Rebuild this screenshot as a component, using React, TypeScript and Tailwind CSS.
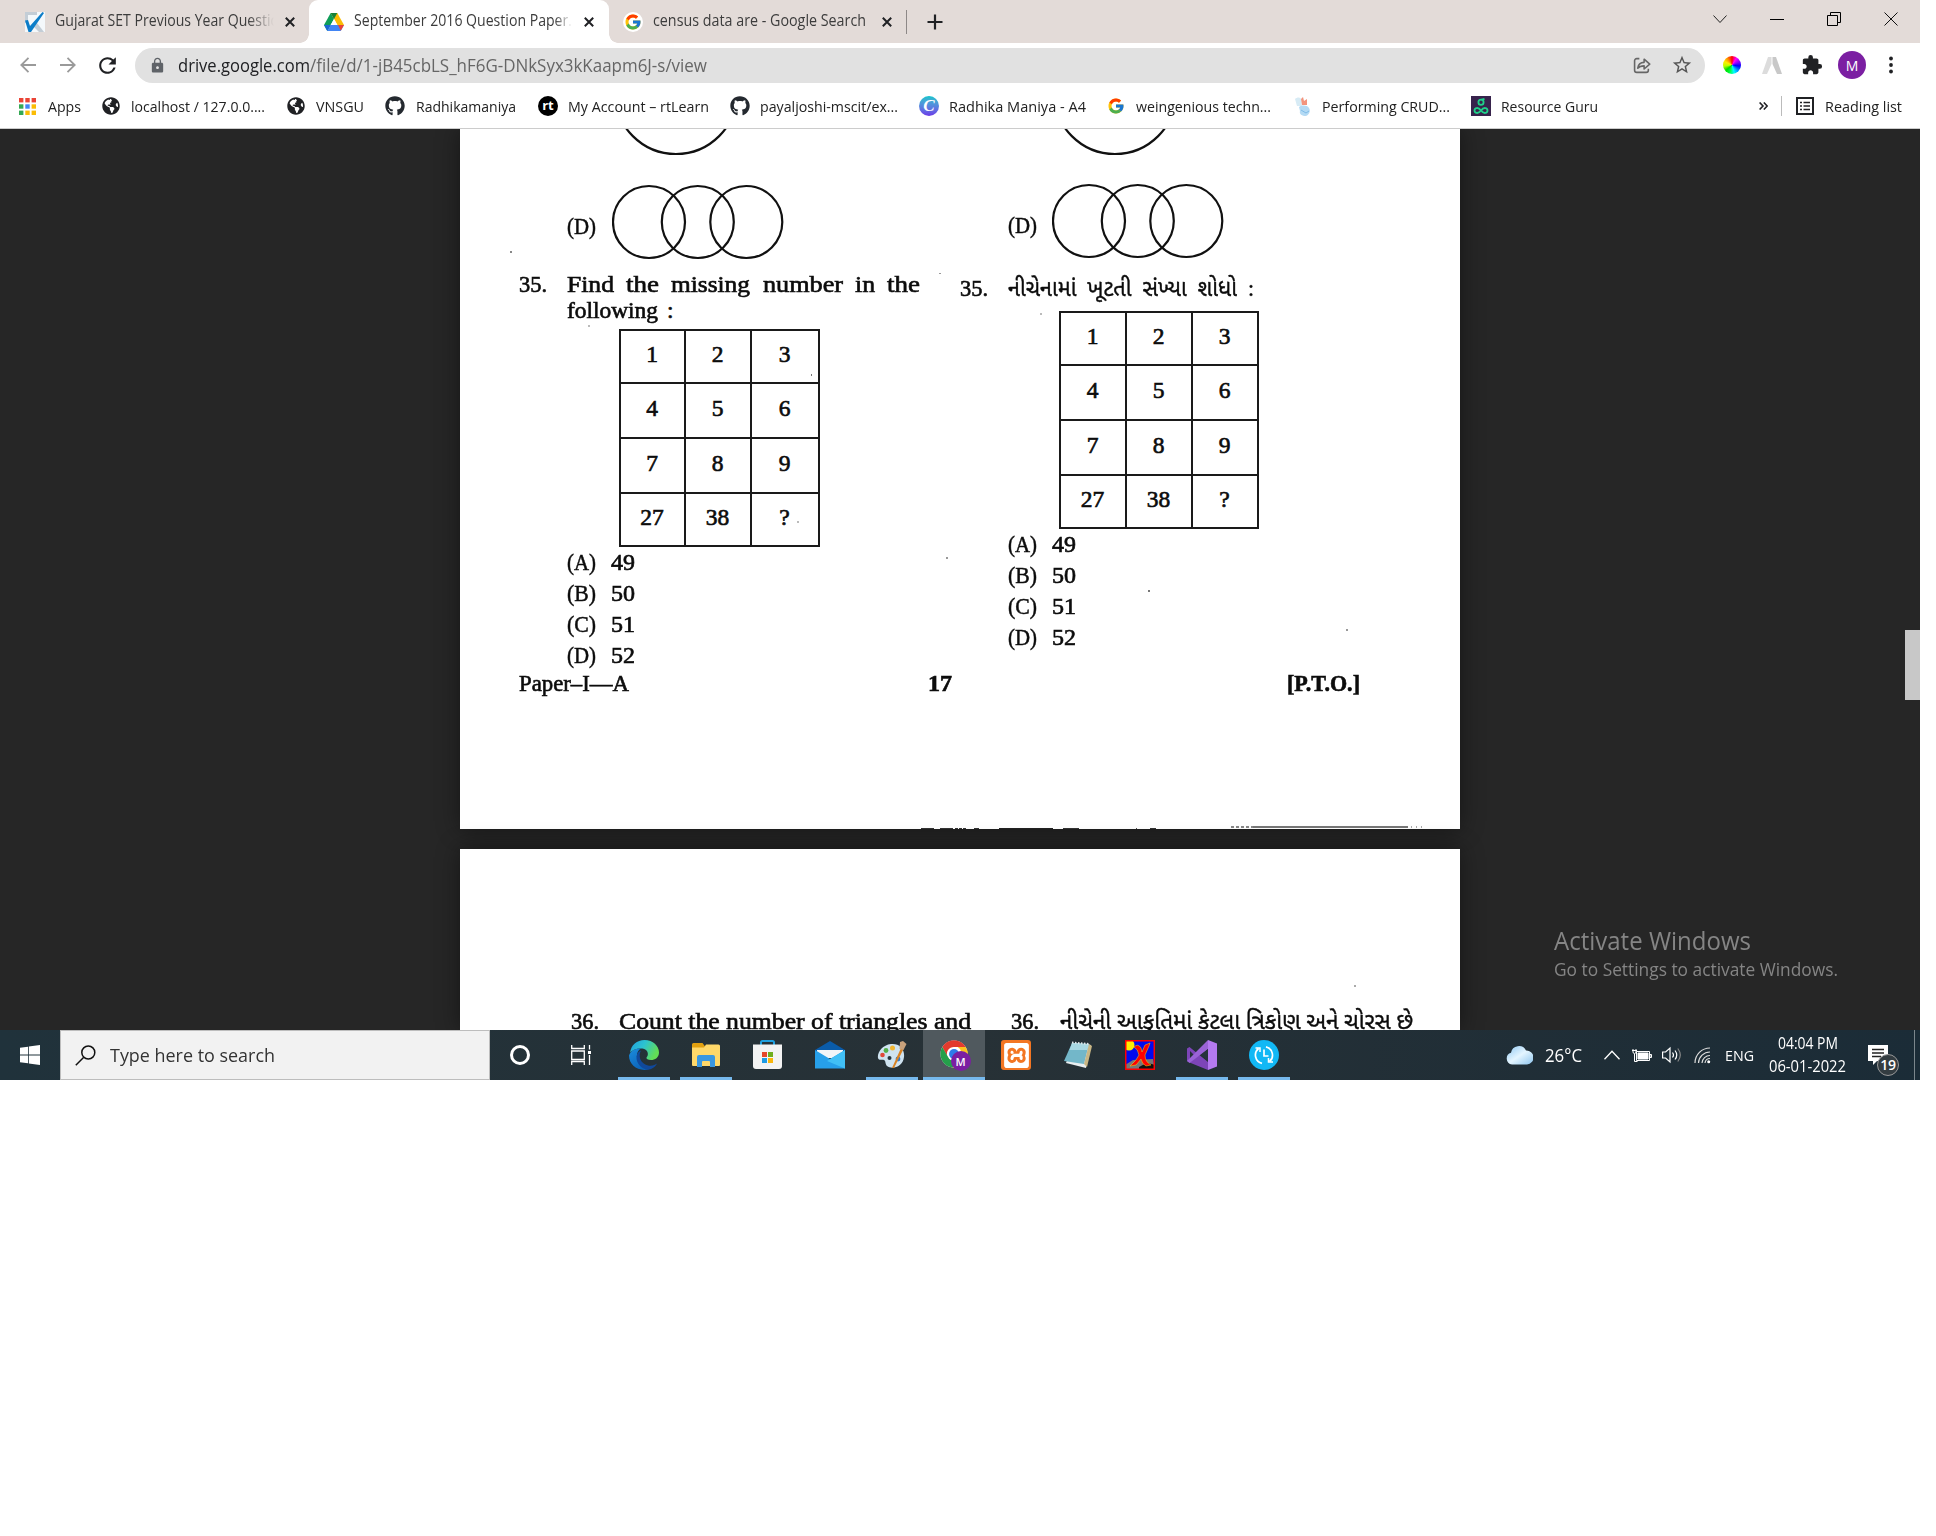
import { useLayoutEffect, useRef, useState, type ReactNode } from 'react';
import { FcGoogle } from 'react-icons/fc';
import { FaGithub, FaGlobeAmericas } from 'react-icons/fa';
import { MdExtension, MdLock, MdRefresh, MdStarBorder } from 'react-icons/md';
import { SiXampp } from 'react-icons/si';

/* One line of text, stretched or squeezed to the width of its box. */
function Fit({ className = '', children }: { className?: string; children: ReactNode }) {
  const box = useRef<HTMLSpanElement>(null);
  const text = useRef<HTMLSpanElement>(null);
  const [scale, setScale] = useState(1);
  useLayoutEffect(() => {
    if (box.current && text.current && text.current.offsetWidth) {
      setScale(box.current.clientWidth / text.current.getBoundingClientRect().width);
    }
  }, []);
  return (
    <span ref={box} className={`block shrink-0 whitespace-nowrap ${className}`}>
      <span ref={text} className="inline-block origin-left" style={{ transform: `scaleX(${scale})` }}>
        {children}
      </span>
    </span>
  );
}

/* ---------- browser chrome ---------- */

function Close({ className = '' }: { className?: string }) {
  return (
    <svg viewBox="0 0 10 10" className={`h-[10px] w-[10px] shrink-0 ${className}`}>
      <path d="M.8.8l8.4 8.4M9.2.8L.8 9.2" stroke="#202124" strokeWidth="2" fill="none" />
    </svg>
  );
}

function TabStrip() {
  return (
    <div className="flex h-[43px] items-center bg-[#e3dbd8] text-[15.5px] text-[#3c3c3c]">
      <div className="flex h-full w-[309px] items-center">
        <svg viewBox="0 0 20 20" className="ml-[25px] h-5 w-5 shrink-0">
          <rect width="20" height="20" fill="#f4f8fb" />
          <path d="M0 0h12v3H3v8H0z" fill="#c3cdd6" />
          <path d="M12 11l7 9h-5l-5-5z" fill="#c3cdd6" />
          <path d="M0 8.500l3-.5 2 6L17.500 0 19 1 6 20H3.500z" fill="#0c7dc8" />
        </svg>
        <div className="ml-[10px] w-[219px] shrink-0 overflow-hidden pb-[2px] [mask-image:linear-gradient(to_right,black_88%,transparent)]">
          <Fit className="w-[224px]">Gujarat SET Previous Year Questio</Fit>
        </div>
        <Close className="ml-[11px]" />
      </div>
      <div className="relative flex h-full w-[300px] items-center rounded-t-[9px] bg-white">
        <span className="absolute bottom-0 -left-[9px] h-[9px] w-[9px] bg-[radial-gradient(circle_at_0_0,#e3dbd8_8.5px,white_9px)]" />
        <span className="absolute -right-[9px] bottom-0 h-[9px] w-[9px] bg-[radial-gradient(circle_at_100%_0,#e3dbd8_8.5px,white_9px)]" />
        <svg viewBox="0 0 20 18" className="ml-[15px] h-[18px] w-5 shrink-0">
          <path d="M6.7 0h6.6L20 12h-6.6z" fill="#fbbc04" />
          <path d="M6.7 0L0 12l3.3 6L10 6z" fill="#0f9d58" />
          <path d="M6.7 12H20l-3.3 6H3.3z" fill="#4285f4" />
          <path d="M14 12h6l-3.2 5.8z" fill="#ea4335" />
          <path d="M6.7 12L3.3 18 0 12z" fill="#1b66d2" />
          <path d="M6.7 0h6.6L10 6z" fill="#188038" />
          <path d="M6.7 12L10 6l3.4 6z" fill="#fff" />
        </svg>
        <div className="ml-[10px] w-[218px] shrink-0 overflow-hidden pb-[2px] [mask-image:linear-gradient(to_right,black_92%,transparent)]">
          <Fit className="w-[218px]">September 2016 Question Paper.</Fit>
        </div>
        <Close className="ml-[12px]" />
      </div>
      <div className="flex h-full w-[297px] items-center">
        <span className="ml-[14px] flex h-5 w-5 items-center justify-center rounded-full bg-white">
          <FcGoogle className="h-[18px] w-[18px]" />
        </span>
        <Fit className="ml-[10px] w-[213px] pb-px">census data are - Google Search</Fit>
        <Close className="ml-[16px]" />
      </div>
      <span className="h-[24px] w-px bg-[#8d8887]" />
      <svg viewBox="0 0 16 16" className="ml-[20px] h-4 w-4">
        <path d="M8 .5v15M.5 8h15" stroke="#202124" strokeWidth="2.2" />
      </svg>
      <div className="mr-[22px] mb-[6px] ml-auto flex items-center gap-[43px]">
        <svg viewBox="0 0 14 14" className="h-[14px] w-[14px]" fill="none" stroke="#222">
          <path d="M.5 3.500L7 10.500l6.500-7" />
        </svg>
        <svg viewBox="0 0 14 14" className="h-[14px] w-[14px]">
          <path d="M0 7.500h14" stroke="#000" />
        </svg>
        <svg viewBox="0 0 14 14" className="h-[14px] w-[14px]" fill="none" stroke="#000">
          <path d="M.5 3.500h10v10H.5zM3.500 3V.5h10v10H11" />
        </svg>
        <svg viewBox="0 0 14 14" className="h-[14px] w-[14px]">
          <path d="M.5.5l13 13M13.500.5l-13 13" stroke="#111" />
        </svg>
      </div>
    </div>
  );
}

function Toolbar() {
  return (
    <div className="flex h-[44px] items-center bg-white">
      <svg viewBox="0 0 16 16" className="ml-[20px] h-4 w-4" fill="none" stroke="#9a9a9a" strokeWidth="1.800">
        <path d="M16 8H1.500M8.500.8L1.300 8l7.200 7.200" />
      </svg>
      <svg viewBox="0 0 16 16" className="ml-[24px] h-4 w-4" fill="none" stroke="#9a9a9a" strokeWidth="1.800">
        <path d="M0 8h14.500M7.500.8L14.700 8l-7.200 7.200" />
      </svg>
      <MdRefresh className="ml-[19px] h-[25px] w-[25px] text-[#202124]" />
      <div className="ml-[15px] flex h-[35px] w-[1570px] items-center rounded-full bg-[#e1e1e1]">
        <MdLock className="ml-[14px] h-[17px] w-[17px] text-[#5f6368]" />
        <div className="ml-[12px] flex items-center text-[17.500px] text-[#666]">
          <Fit className="w-[132px] text-[#202124]">drive.google.com</Fit>
          <Fit className="w-[397px]">/file/d/1-jB45cbLS_hF6G-DNkSyx3kKaapm6J-s/view</Fit>
        </div>
        <svg viewBox="0 0 17 17" className="mr-[20px] ml-auto h-[18px] w-[18px]" fill="none" stroke="#666" strokeWidth="1.500">
          <path d="M6 2.500H3.500a2 2 0 0 0-2 2v9a2 2 0 0 0 2 2h9a2 2 0 0 0 2-2V12" />
          <path d="M4.500 11.500C5 7.500 7.500 6 10.500 6V3l5.300 4.700-5.300 4.600V9.300c-2.500 0-4.500.5-6 2.200z" strokeLinejoin="round" />
        </svg>
        <MdStarBorder className="mr-[12px] h-[22px] w-[22px] text-[#555]" />
      </div>
      <span className="ml-[18px] h-[18px] w-[18px] rounded-full bg-[conic-gradient(#f00,#f0f,#80f,#00f,#08f,#0ff,#0f4,#0d0,#bf0,#fe0,#f80,#f00)]" />
      <svg viewBox="0 0 20 17" className="ml-[21px] h-[17px] w-5">
        <path d="M6 0h3.500v7L5 17H0z" fill="#dcdcdc" />
        <path d="M10.500 0H14l6 17h-5l-4.500-10z" fill="#c8c8c8" />
      </svg>
      <MdExtension className="ml-[19px] h-[22px] w-[22px] text-[#202124]" />
      <span className="ml-[15px] flex h-7 w-7 items-center justify-center rounded-full bg-[#7b1fa2] text-[14px] text-white">
        M
      </span>
      <svg viewBox="0 0 4 18" className="ml-[23px] h-[18px] w-[4px]" fill="#202124">
        <circle cx="2" cy="2.500" r="1.900" />
        <circle cx="2" cy="9" r="1.900" />
        <circle cx="2" cy="15.500" r="1.900" />
      </svg>
    </div>
  );
}

const APP_COLORS = ['#ea4335', '#ea4335', '#ea4335', '#34a853', '#4285f4', '#fbbc04', '#34a853', '#fbbc04', '#fbbc04'];

function BookmarksBar() {
  return (
    <div className="flex h-[42px] items-center border-b border-[#ccc] bg-white pb-[3px] text-[15.200px] leading-[20px] text-[#222]">
      <svg viewBox="0 0 17 17" className="ml-[19px] h-[17px] w-[17px]">
        {APP_COLORS.map((c, i) => (
          <rect key={i} x={(i % 3) * 6.300} y={Math.floor(i / 3) * 6.300} width="4.400" height="4.400" fill={c} />
        ))}
      </svg>
      <Fit className="ml-[12px] w-[33px]">Apps</Fit>
      <FaGlobeAmericas className="ml-[21px] h-[18px] w-[18px] text-[#202124]" />
      <Fit className="ml-[11px] w-[134px]">localhost / 127.0.0....</Fit>
      <FaGlobeAmericas className="ml-[22px] h-[18px] w-[18px] text-[#202124]" />
      <Fit className="ml-[11px] w-[48px]">VNSGU</Fit>
      <FaGithub className="ml-[21px] h-5 w-5 text-[#24292f]" />
      <Fit className="ml-[11px] w-[100px]">Radhikamaniya</Fit>
      <span className="ml-[22px] flex h-5 w-5 items-center justify-center rounded-full bg-black pb-px text-[13px] leading-none font-bold text-white">
        rt
      </span>
      <Fit className="ml-[10px] w-[141px]">My Account – rtLearn</Fit>
      <FaGithub className="ml-[21px] h-5 w-5 text-[#24292f]" />
      <Fit className="ml-[10px] w-[138px]">payaljoshi-mscit/ex...</Fit>
      <span className="ml-[21px] flex h-5 w-5 items-center justify-center rounded-full bg-linear-to-b from-[#00c4cc] to-[#6a35e8] pb-[2px] font-['Liberation_Serif',serif] text-[17px] leading-none font-bold text-white italic">
        C
      </span>
      <Fit className="ml-[10px] w-[137px]">Radhika Maniya - A4</Fit>
      <FcGoogle className="ml-[21px] h-[18px] w-[18px]" />
      <Fit className="ml-[11px] w-[135px]">weingenious techn...</Fit>
      <svg viewBox="0 0 16 19" className="ml-[24px] h-[19px] w-4">
        <path d="M0 2c2-2 5-2 6 0l1 7H2z" fill="#d7ebf5" />
        <path d="M6 2l2-2 1 4 3-2v6H7z" fill="#f0795c" opacity=".8" />
        <path d="M4 10c3-2 8-2 10 1 2 3 0 7-3 8-4 0-7-2-6-5z" fill="#b4daf4" />
        <path d="M6 13l5 3 3-2" stroke="#7fbce8" fill="none" />
      </svg>
      <Fit className="ml-[11px] w-[128px]">Performing CRUD...</Fit>
      <svg viewBox="0 0 20 20" className="ml-[21px] h-5 w-5" fill="none" stroke="#1fd18a" strokeWidth="1.800">
        <rect width="20" height="20" fill="#37234c" stroke="none" />
        <circle cx="10" cy="6.300" r="2.600" />
        <path d="M10.500 3.700L13.500 3" />
        <path d="M10 14.500c-3-4-6.500-2.500-6.500 0s3.500 4 6.500 0c3-4 6.500-2.500 6.500 0s-3.500 4-6.500 0z" />
      </svg>
      <Fit className="ml-[10px] w-[97px]">Resource Guru</Fit>
      <svg viewBox="0 0 9 8" className="mr-[13px] ml-auto h-[8px] w-[9px]" fill="none" stroke="#202124" strokeWidth="1.600">
        <path d="M.6.5L4 4 .6 7.500M4.800.5L8.200 4 4.800 7.500" />
      </svg>
      <span className="h-5 w-px bg-[#bbb]" />
      <svg viewBox="0 0 18 18" className="ml-[14px] h-[18px] w-[18px]" fill="none" stroke="#202124" strokeWidth="2">
        <rect x="1" y="1" width="16" height="16" />
        <path d="M4 5.500h2M4 9h2M4 12.500h2M7.500 5.500H14M7.500 9H14M7.500 12.500H14" strokeWidth="1.500" />
      </svg>
      <Fit className="mr-[18px] ml-[11px] w-[77px]">Reading list</Fit>
    </div>
  );
}

/* ---------- scanned paper ---------- */

function Arc({ className = '' }: { className?: string }) {
  return (
    <svg viewBox="0 0 128 28" className={`block h-[28px] w-[128px] ${className}`}>
      <circle cx="64" cy="-36" r="61" fill="none" stroke="#111" strokeWidth="2.200" />
    </svg>
  );
}

function Venn({ className = '' }: { className?: string }) {
  return (
    <svg viewBox="0 0 172 76" className={`h-[76px] w-[172px] shrink-0 ${className}`} fill="none" stroke="#111" strokeWidth="2.200">
      <circle cx="37" cy="38" r="36" />
      <circle cx="85.800" cy="38" r="36" />
      <circle cx="134.300" cy="38" r="36" />
    </svg>
  );
}

function NumberGrid({ className = '' }: { className?: string }) {
  const cells = ['1', '2', '3', '4', '5', '6', '7', '8', '9', '27', '38', '?'];
  return (
    <div className={`grid grid-rows-[53px_55px_55px_53px] border-t-2 border-l-2 border-[#1a1a1a] ${className}`}>
      {cells.map((c) => (
        <div key={c} className="flex items-center justify-center border-r-2 border-b-2 border-[#1a1a1a] pr-px pb-[5px]">
          {c}
        </div>
      ))}
    </div>
  );
}

function Options() {
  const options = [
    ['(A)', '49'],
    ['(B)', '50'],
    ['(C)', '51'],
    ['(D)', '52'],
  ];
  return (
    <div className="mt-[2px] ml-[49px]">
      {options.map(([label, value]) => (
        <div key={label} className="flex h-[31px]">
          <Fit className="w-[29px] [-webkit-text-stroke:0.5px]">{label}</Fit>
          <Fit className="ml-[15px] w-[24px]">{value}</Fit>
        </div>
      ))}
    </div>
  );
}

function PaperOne() {
  return (
    <div className="h-[700px] w-[1000px] shrink-0 overflow-hidden bg-white shadow-[0_0_22px_rgba(0,0,0,0.45)]">
      <div className="flex h-[540px] pl-[58px]">
        <div className="w-[441px]">
          <Arc className="ml-[94px]" />
          <div className="mt-[27px] flex h-[76px] pl-[49px]">
            <Fit className="mt-[29px] w-[29px] [-webkit-text-stroke:0.5px]">(D)</Fit>
            <Venn className="ml-[16px]" />
          </div>
          <div className="mt-[11px] flex">
            <Fit className="ml-px w-[28px]">35.</Fit>
            <div className="ml-[20px] w-[353px]">
              <div className="flex justify-between">
                <Fit className="w-[47px]">Find</Fit>
                <Fit className="w-[33px]">the</Fit>
                <Fit className="w-[79px]">missing</Fit>
                <Fit className="w-[80px]">number</Fit>
                <Fit className="w-[20px]">in</Fit>
                <Fit className="w-[33px]">the</Fit>
              </div>
              <div className="flex">
                <Fit className="w-[91px]">following</Fit>
                <span className="ml-[9px]">:</span>
              </div>
            </div>
          </div>
          <NumberGrid className="mt-[6px] ml-[101px] w-[201px] grid-cols-[65px_66px_68px]" />
          <Options />
        </div>
        <div className="flex-1">
          <Arc className="ml-[92px]" />
          <div className="mt-[26px] flex h-[76px] pl-[49px]">
            <Fit className="mt-[29px] w-[29px] [-webkit-text-stroke:0.5px]">(D)</Fit>
            <Venn className="ml-[15px]" />
          </div>
          <div className="mt-[16px] flex h-[26px]">
            <Fit className="ml-px w-[28px]">35.</Fit>
            <Fit className="ml-[20px] w-[246px] [-webkit-text-stroke:0.4px]">નીચેનામાં &nbsp;ખૂટતી &nbsp;સંખ્યા &nbsp;શોધો &nbsp;:</Fit>
          </div>
          <NumberGrid className="mt-[10px] ml-[100px] w-[200px] grid-cols-[66px_66px_66px]" />
          <Options />
        </div>
      </div>
      <div className="flex h-[26px] pl-[59px]">
        <Fit className="mt-px w-[110px]">Paper–I—A</Fit>
        <Fit className="mt-px ml-[299px] w-[24px] font-bold">17</Fit>
        <Fit className="mt-px ml-[335px] w-[73px] font-bold">[P.T.O.]</Fit>
      </div>
      <div className="mt-[131px] flex h-[3px] items-end pl-[461px]">
        <span className="h-px w-[13px] bg-[#333]" />
        <span className="ml-[6px] h-px w-[13px] bg-[#333]" />
        <span className="ml-[2px] h-px w-[12px] bg-[repeating-linear-gradient(90deg,#333_0_3px,white_3px_4px)]" />
        <span className="ml-[7px] h-px w-[5px] bg-[#333]" />
        <span className="ml-[20px] h-px w-[54px] bg-[#222]" />
        <span className="ml-[10px] h-px w-[16px] bg-[#333]" />
        <span className="ml-[57px] h-px w-px bg-[#555]" />
        <span className="ml-[13px] h-px w-[6px] bg-[#333]" />
        <span className="mb-px ml-[75px] h-[2px] w-[22px] bg-[repeating-linear-gradient(90deg,#888_0_3px,white_3px_5px)]" />
        <span className="mb-px h-[2px] w-[155px] bg-[#777]" />
        <span className="mb-px ml-[3px] h-[2px] w-[14px] bg-[repeating-linear-gradient(90deg,#aaa_0_1px,white_1px_5px)]" />
      </div>
    </div>
  );
}

function PaperTwo() {
  return (
    <div className="mt-[20px] h-[181px] w-[1000px] shrink-0 overflow-hidden bg-white pt-[159px] shadow-[0_0_22px_rgba(0,0,0,0.45)]">
      <div className="flex pl-[111px]">
        <Fit className="w-[28px]">36.</Fit>
        <Fit className="ml-[20px] w-[352px]">Count the number of triangles and</Fit>
        <Fit className="ml-[40px] w-[28px]">36.</Fit>
        <Fit className="ml-[21px] w-[353px] [-webkit-text-stroke:0.4px]">નીચેની આકૃતિમાં કેટલા ત્રિકોણ અને ચોરસ છે</Fit>
      </div>
    </div>
  );
}

/* Dust marks left by the scanner. */
function Specks() {
  return (
    <>
      <span className="absolute top-[122px] left-[510px] h-[2px] w-[2px] bg-[#888]" />
      <span className="absolute top-[144px] left-[939px] h-[1px] w-[2px] bg-[#999]" />
      <span className="absolute top-[196px] left-[588px] h-[2px] w-[2px] bg-[#bbb]" />
      <span className="absolute top-[245px] left-[811px] h-[2px] w-[1px] bg-[#777]" />
      <span className="absolute top-[392px] left-[797px] h-[2px] w-[2px] bg-[#bbb]" />
      <span className="absolute top-[184px] left-[1040px] h-[2px] w-[2px] bg-[#bbb]" />
      <span className="absolute top-[428px] left-[946px] h-[2px] w-[2px] bg-[#999]" />
      <span className="absolute top-[461px] left-[1148px] h-[2px] w-[2px] bg-[#777]" />
      <span className="absolute top-[500px] left-[1346px] h-[2px] w-[2px] bg-[#999]" />
      <span className="absolute top-[856px] left-[1354px] h-[2px] w-[2px] bg-[#aaa]" />
    </>
  );
}

function Viewer() {
  return (
    <div className="relative h-[901px] overflow-hidden bg-[#262626]">
      <div className="ml-[460px] flex w-[1000px] flex-col font-['Liberation_Serif','Noto_Sans_Gujarati',serif] text-[23.500px] leading-[26px] text-[#0c0c0c] [-webkit-text-stroke:0.65px]">
        <PaperOne />
        <PaperTwo />
      </div>
      <Specks />
      <div className="absolute top-[501px] right-0 h-[70px] w-[15px] bg-[#c8c8c8]" />
      <div className="absolute top-[795px] left-[1554px] text-[#858585]">
        <Fit className="w-[197px] text-[26px] leading-[32px]">Activate Windows</Fit>
        <Fit className="mt-px w-[284px] text-[18px] leading-[24px]">Go to Settings to activate Windows.</Fit>
      </div>
    </div>
  );
}

/* ---------- taskbar ---------- */

function EdgeIcon() {
  return (
    <svg viewBox="0 0 30 30" className="h-[30px] w-[30px]">
      <defs>
        <linearGradient id="edgeTop" x1="0" y1="0" x2="1" y2="0.400">
          <stop offset="0" stopColor="#1f9de0" />
          <stop offset=".5" stopColor="#2cc3d0" />
          <stop offset="1" stopColor="#62dd55" />
        </linearGradient>
        <linearGradient id="edgeLeft" x1="0" y1="0" x2="0.600" y2="1">
          <stop offset="0" stopColor="#1b8ddd" />
          <stop offset="1" stopColor="#0b62b8" />
        </linearGradient>
      </defs>
      <path d="M1 13C2 5 8 0 15.500 0 24 0 30 6 30 12.500c0 5-4 7.500-8 7.500-3 0-5-1-4.500-2.500 3-3 1-8.500-4-9C8 8 3 10 1 13z" fill="url(#edgeTop)" />
      <path d="M0 15.500C2 10 7 8 12 8.500c-3 1.500-4.500 5-4 9C9 24 15 29 20 29.300 9 32 0 25 0 15.500z" fill="url(#edgeLeft)" />
      <path d="M12 10.500c-3 5-1 13 7 15 4 .8 7-.5 9-2-2 4-6 6-9 6.200C12 29 7 23 7.500 16.500 8 13 10 11 12 10.500z" fill="#10499c" />
    </svg>
  );
}

function ExplorerIcon() {
  return (
    <svg viewBox="0 0 28 24" className="h-[24px] w-[28px]">
      <path d="M0 1.500Q0 0 1.500 0h9l3 4H28v18H0z" fill="#e2a00f" />
      <path d="M0 4.500h12l2-3h12.500Q28 1.500 28 3v19q0 1-1 1H1q-1 0-1-1z" fill="#ffd869" />
      <path d="M5 14q0-2 2-2h14q2 0 2 2v10h-5v-5q0-1-1-1h-6q-1 0-1 1v5H5z" fill="#3a97e0" />
    </svg>
  );
}

function StoreIcon() {
  return (
    <svg viewBox="0 0 29 30" className="h-[30px] w-[29px]">
      <path d="M8 6V2.500Q8 1 9.500 1h10Q21 1 21 2.500V6" fill="none" stroke="#1fa0e0" strokeWidth="2" />
      <path d="M0 4.500h29V26q0 3-3 3H3q-3 0-3-3z" fill="#f3f3f3" />
      <path d="M9 12h5v5H9z" fill="#e5472b" />
      <path d="M15 12h5v5h-5z" fill="#6fae1e" />
      <path d="M9 18h5v5H9z" fill="#1e9be4" />
      <path d="M15 18h5v5h-5z" fill="#f9b60d" />
    </svg>
  );
}

function MailIcon() {
  return (
    <svg viewBox="0 0 30 28" className="h-[28px] w-[30px]">
      <path d="M0 9L15 0l15 9v5H0z" fill="#0a5ba8" />
      <path d="M2 9h26v8H2z" fill="#f2f5f8" />
      <path d="M0 9l15 9 15-9v18.500H0z" fill="#27a0ea" />
      <path d="M30 9L12 20l18 7.500z" fill="#41c0f6" />
    </svg>
  );
}

function PaintIcon() {
  return (
    <svg viewBox="0 0 30 28" className="h-[28px] w-[30px]">
      <path d="M14 3C5 4 0 12 1 17c1 3 4 1 6 2s1 4 3 6c5 4 16 1 17-9C28 8 22 2 14 3z" fill="#cfe3f0" />
      <circle cx="15.500" cy="7" r="2.500" fill="#f2b632" />
      <circle cx="9" cy="9.500" r="2.400" fill="#55b04a" />
      <circle cx="5.500" cy="14" r="2.300" fill="#e04a3a" />
      <circle cx="21" cy="18" r="2.400" fill="#2e7bd0" />
      <circle cx="12.500" cy="17" r="2" fill="#26343c" />
      <path d="M24 7l2.500 1L17 27h-2z" fill="#d98324" />
      <path d="M23 1l3-1 3.500 3-3 6-4-1z" fill="#c9a27c" />
    </svg>
  );
}

function ChromeIcon() {
  return (
    <span className="relative ml-[3px] block h-[30px] w-[32px]">
      <svg viewBox="0 0 30 30" className="h-[28px] w-[28px]">
        <circle cx="15" cy="15" r="14.500" fill="#fff" />
        <path d="M2.500 7.500a14.500 14.500 0 0 1 25 0H15A7.500 7.500 0 0 0 8 18z" fill="#e33b2e" />
        <path d="M2.500 7.500L8.500 18A7.500 7.500 0 0 0 17 22l-3.500 7.500A14.500 14.500 0 0 1 2.500 7.500z" fill="#25a04b" />
        <path d="M27.500 7.500A14.500 14.500 0 0 1 13.500 29.500L21 19a7.500 7.500 0 0 0-2-11.500z" fill="#fcc31e" />
        <circle cx="15" cy="15" r="6.800" fill="#fff" />
        <circle cx="15" cy="15" r="5.300" fill="#2f7bea" />
      </svg>
      <span className="absolute top-[11px] left-[11px] flex h-[20px] w-[20px] items-center justify-center rounded-full bg-[#7b1fa2] text-[11px] leading-none font-semibold text-white">
        M
      </span>
    </span>
  );
}

function NotepadIcon() {
  return (
    <svg viewBox="0 0 28 28" className="h-[28px] w-[28px]">
      <path d="M9 2l18 2-5 23L2 22z" fill="#e9eef0" />
      <path d="M8 2l17 1-5 20L0 20z" fill="#73b7c9" />
      <path d="M8 2l17 1-1.500 6L5.500 9z" fill="#a9d8e2" />
      <path d="M8 1.500l17 1.500" stroke="#dfe6e8" strokeWidth="2" strokeDasharray="1.500 1.500" />
      <path d="M20 23l5-20 3 2-5 21z" fill="#c9b684" />
    </svg>
  );
}

function PixelXIcon() {
  return (
    <svg viewBox="0 0 30 30" className="h-[30px] w-[30px]">
      <rect width="30" height="30" fill="#0009ee" />
      <path d="M0 25l8-5 20-1 2 11H0z" fill="#777" />
      <path d="M14 27q8-6 16-2v5H14z" fill="#111" />
      <circle cx="4" cy="5" r="5.500" fill="#ffee00" />
      <path d="M9 7q4-4 7 1l1 4 3-7 5-2-1 3-4 9q0 7 6 10l-5 1q-4-2-5-7l-5 6-6 1q7-6 9-11-1-6-5-8z" fill="#f00" stroke="#fd0" strokeWidth=".5" />
      <rect x=".75" y=".75" width="28.500" height="28.500" fill="none" stroke="#f00" strokeWidth="1.500" />
    </svg>
  );
}

function VisualStudioIcon() {
  return (
    <svg viewBox="0 0 30 30" className="h-[30px] w-[30px]">
      <path d="M0 8.500L2.500 7 21 22v8L2.500 22.500 0 21zM3 11v8l4-4z" fill="#7d45b8" fillRule="evenodd" />
      <path d="M0 21L21 0v9L2.500 23z" fill="#9a63d6" />
      <path d="M21 0l9 3.500v23L21 30z" fill="#b47af0" />
      <path d="M21 9v12l-7-6z" fill="#26333b" />
    </svg>
  );
}

function ClockIcon() {
  return (
    <svg viewBox="0 0 30 30" className="h-[30px] w-[30px]" fill="none" stroke="#fff" strokeWidth="1.700">
      <circle cx="15" cy="15" r="15" fill="#12b8f5" stroke="none" />
      <path d="M9.500 8.500a8.500 8.500 0 0 0 3.500 14.800M20.500 21.500A8.500 8.500 0 0 0 17 6.800" />
      <path d="M6.500 8h4.500v4M24 22h-4.500v-4" strokeWidth="1.500" />
      <path d="M15 9.500V16h4.500" />
    </svg>
  );
}

function TaskCell({ children, open = false, active = false }: { children: ReactNode; open?: boolean; active?: boolean }) {
  return (
    <div className={`relative flex h-full w-[62px] items-center justify-center ${active ? 'bg-[#50595e]' : ''}`}>
      {children}
      {open && <span className={`absolute bottom-0 h-[3px] bg-[#76b9ed] ${active ? 'inset-x-0' : 'inset-x-[5px]'}`} />}
    </div>
  );
}

function Taskbar() {
  return (
    <div className="flex h-[50px] items-center bg-linear-to-r from-[#20323b] via-[#273136] to-[#1b2c37] text-white">
      <svg viewBox="0 0 20 20" className="ml-[20px] h-5 w-5" fill="#fff">
        <path d="M0 2.800L8 1.700v7.900H0zM8.800 1.500L20 0v9.600H8.800zM0 10.400h8v7.900l-8-1.100zM8.800 10.400H20V20L8.800 18.500z" />
      </svg>
      <div className="ml-[20px] flex h-full w-[430px] items-center border border-[#bdbdbd] bg-[#f2f2f2] text-[#333]">
        <svg viewBox="0 0 21 21" className="ml-[14px] h-[21px] w-[21px]" fill="none" stroke="#111" strokeWidth="1.500">
          <circle cx="13.300" cy="7.500" r="6.500" />
          <path d="M8.500 12.500L.8 20.200" />
        </svg>
        <Fit className="ml-[14px] w-[165px] text-[18.500px]">Type here to search</Fit>
      </div>
      <div className="-ml-px flex h-full">
        <TaskCell>
          <span className="mr-px h-[20px] w-[20px] rounded-full border-3 border-white" />
        </TaskCell>
        <TaskCell>
          <svg viewBox="0 0 20 20" className="mr-[3px] h-5 w-5" fill="none" stroke="#fff" strokeWidth="1.300">
            <path d="M.7 0v3.500h12.600V0M.7 6h12.600v8.500H.7zM.7 20v-3.500h12.600V20M18.500 0v4.500M18.500 10v10" />
            <path d="M17 6h3v3h-3z" fill="#fff" stroke="none" />
          </svg>
        </TaskCell>
        <TaskCell open><EdgeIcon /></TaskCell>
        <TaskCell open><ExplorerIcon /></TaskCell>
        <TaskCell><span className="mr-[2px]"><StoreIcon /></span></TaskCell>
        <TaskCell><MailIcon /></TaskCell>
        <TaskCell open><PaintIcon /></TaskCell>
        <TaskCell open active><ChromeIcon /></TaskCell>
        <TaskCell>
          <span className="flex h-[30px] w-[30px] items-center justify-center rounded-[3px] bg-[#f37623]">
            <SiXampp className="h-[25px] w-[25px] text-white" />
          </span>
        </TaskCell>
        <TaskCell><NotepadIcon /></TaskCell>
        <TaskCell><PixelXIcon /></TaskCell>
        <TaskCell open><VisualStudioIcon /></TaskCell>
        <TaskCell open><ClockIcon /></TaskCell>
      </div>
      <svg viewBox="0 0 27 20" className="ml-auto h-[20px] w-[27px]">
        <defs>
          <linearGradient id="cloud" x1="0" y1="0" x2="1" y2="1">
            <stop offset="0" stopColor="#8fc8f2" />
            <stop offset=".5" stopColor="#e4f5ff" />
            <stop offset="1" stopColor="#8cc4ee" />
          </linearGradient>
        </defs>
        <path d="M6 19.500a6 6 0 0 1-1-11.700A8 8 0 0 1 20 5.500 7 7 0 0 1 21 19.500z" fill="url(#cloud)" />
      </svg>
      <Fit className="ml-[12px] w-[37px] pt-px text-[17.500px]">26°C</Fit>
      <svg viewBox="0 0 16 10" className="ml-[22px] h-[10px] w-4" fill="none" stroke="#fff" strokeWidth="1.300">
        <path d="M.5 9.300L8 1.300l7.500 8" />
      </svg>
      <svg viewBox="0 0 20 14" className="ml-[12px] h-[14px] w-5" fill="none" stroke="#fff">
        <path d="M4.500 3.500h13v9H4.500z" />
        <path d="M6 5h10v6H6z" fill="#fff" />
        <path d="M18 6.500h1.500v3H18zM1 1v3q0 1.500 1.500 1.500T4 4V1M0 2.500h5M2.500 6v7.500h3" />
      </svg>
      <svg viewBox="0 0 20 18" className="ml-[10px] h-[18px] w-5" fill="none" stroke="#fff" strokeWidth="1.200">
        <path d="M.6 6h3L8 2v14l-4.400-4h-3z" />
        <path d="M10.500 6.500q2 2.500 0 5M13 4.500q3.500 4.500 0 9" />
        <path d="M15.800 2.500q5 6.500 0 13" stroke="#888" />
      </svg>
      <svg viewBox="0 0 17 17" className="ml-[12px] h-[17px] w-[17px]" fill="none" stroke="#ddd" strokeWidth="1.200">
        <path d="M1 16A15 15 0 0 1 16 1M4.500 16A11.500 11.500 0 0 1 16 5M8 16a8 8 0 0 1 8-7.500" />
        <path d="M11 16a5 5 0 0 1 5-4.500" />
        <circle cx="14.700" cy="14.700" r="1.500" fill="#fff" stroke="none" />
      </svg>
      <Fit className="ml-[14px] w-[29px] text-[15px]">ENG</Fit>
      <div className="ml-[15px] flex w-[77px] flex-col items-center text-[15.500px] leading-[23px]">
        <Fit className="w-[60px]">04:04 PM</Fit>
        <Fit className="w-[77px]">06-01-2022</Fit>
      </div>
      <div className="relative ml-[22px] h-[20px] w-[20px]">
        <svg viewBox="0 0 20 20" className="h-5 w-5">
          <path d="M0 0h20v16H9l-4 4v-4H0z" fill="#fff" />
          <path d="M4 4.500h12M4 8h12M4 11.500h9" stroke="#222" strokeWidth="1.300" />
        </svg>
        <span className="absolute top-[9px] left-[9px] flex h-[22px] w-[22px] items-center justify-center rounded-full border border-[#999] bg-[#333c41] text-[14px] leading-none font-semibold tracking-tight">
          19
        </span>
      </div>
      <span className="mr-[5px] ml-[26px] h-full w-px bg-[#7b868c]" />
    </div>
  );
}

export default function App() {
  return (
    <div className="h-[1536px] w-full bg-white font-['Open_Sans','Noto_Sans',sans-serif]">
      <div className="flex h-[1080px] w-[1920px] flex-col overflow-hidden">
        <TabStrip />
        <Toolbar />
        <BookmarksBar />
        <Viewer />
        <Taskbar />
      </div>
    </div>
  );
}
